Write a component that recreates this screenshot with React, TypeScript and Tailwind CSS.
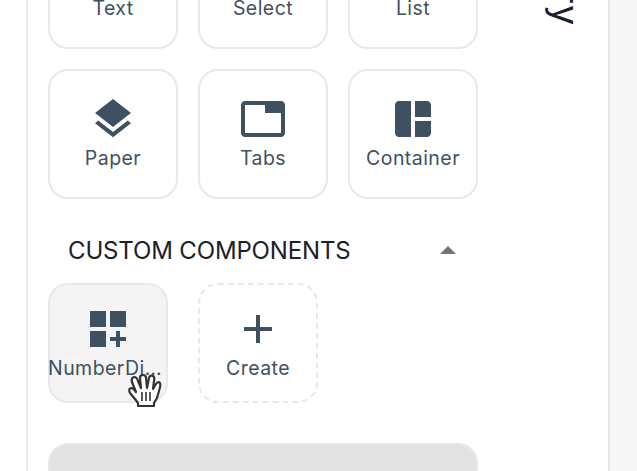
import type { ReactNode } from "react";

const paths = {
  layers:
    "M11.99 18.54l-7.37-5.73L3 14.07l9 7 9-7-1.63-1.27-7.38 5.74zM12 16l7.36-5.73L21 9l-9-7-9 7 1.63 1.27L12 16z",
  tab: "M21 3H3c-1.1 0-2 .9-2 2v14c0 1.1.9 2 2 2h18c1.1 0 2-.9 2-2V5c0-1.1-.9-2-2-2zm0 16H3V5h10v4h8v10z",
  container:
    "M11 21H5c-1.1 0-2-.9-2-2V5c0-1.1.9-2 2-2h6v18zm2 0h6c1.1 0 2-.9 2-2v-6h-8v8zm8-10V5c0-1.1-.9-2-2-2h-6v8h8z",
  widgets: "M3 3h8v8H3zM13 3h8v8h-8zM3 13h8v8H3zM18 13h-2v3h-3v2h3v3h2v-3h3v-2h-3z",
  add: "M19 13h-6v6h-2v-6H5v-2h6V5h2v6h6v2z",
};

function Icon({ name }: { name: keyof typeof paths }) {
  return (
    <svg viewBox="0 0 24 24" className="size-12 shrink-0 fill-[#3f5060]">
      <path d={paths[name]} />
    </svg>
  );
}

function Tile({ label, icon }: { label: string; icon?: keyof typeof paths }) {
  return (
    <div className="flex size-[130px] shrink-0 flex-col items-center rounded-[20px] border-2 border-[#e5e9ee] pt-6">
      {icon ? <Icon name={icon} /> : <div className="size-12 shrink-0" />}
      <span className="leading-[30px]">{label}</span>
    </div>
  );
}

function SmallTile({ className, children }: { className: string; children: ReactNode }) {
  return (
    <div className={`flex size-[120px] shrink-0 flex-col items-center rounded-[20px] border-2 border-[#e5e9ee] pt-5 ${className}`}>
      {children}
    </div>
  );
}

function HandCursor() {
  return (
    <svg viewBox="0 0 36 38" className="absolute left-[127px] top-[372px] h-[38px] w-9">
      <path
        d="M11 34V31L8 27L3 21Q1 17 4 16Q6 16 9 20L5 10Q4 6 7 5Q10 5 11 9L14 16L13 6Q13 3 16 3Q19 3 19 6L20 16L22 6Q23 3 26 4Q28 5 27 9L26 17L29 12Q31 9 33 11Q34 13 32 19L30 26L27 31V34Z"
        className="fill-white stroke-[#333]"
        strokeWidth="2.2"
        strokeLinejoin="round"
      />
      <path d="M15 20V29M19 20V29M23 20V29" className="fill-none stroke-[#333]" strokeWidth="1.6" />
    </svg>
  );
}

export default function App() {
  return (
    <div className="relative flex h-[471px] w-[637px] overflow-hidden bg-white font-['Inter',sans-serif] text-[19.5px] font-[370] tracking-[0.45px] text-[#3f5060]">
      <aside className="ml-[26px] flex h-full w-[584px] shrink-0 justify-between border-x-2 border-[#e5e9ee]">
        <div className="ml-5 w-[430px] shrink-0">
          <div className="-mt-[81px] flex gap-5">
            <Tile label="Text" />
            <Tile label="Select" />
            <Tile label="List" />
          </div>
          <div className="mt-5 flex gap-5">
            <Tile label="Paper" icon="layers" />
            <Tile label="Tabs" icon="tab" />
            <Tile label="Container" icon="container" />
          </div>
          <div className="mt-8 flex h-10 items-center justify-between pl-5 pr-[22px] text-[24px] font-[370] tracking-[-0.15px] text-[#1b2127]">
            <span>CUSTOM COMPONENTS</span>
            <svg viewBox="0 0 16 8" className="mb-0.5 h-2 w-4 fill-[#757575]">
              <path d="M0 8L8 0L16 8Z" />
            </svg>
          </div>
          <div className="mt-3 flex gap-[30px]">
            <SmallTile className="bg-[#f4f4f4]">
              <Icon name="widgets" />
              <span className="-ml-1 w-[116px] truncate leading-[30px]">NumberDisplay</span>
            </SmallTile>
            <SmallTile className="border-dashed">
              <Icon name="add" />
              <span className="leading-[30px]">Create</span>
            </SmallTile>
          </div>
          <div className="mt-10 h-[130px] rounded-[20px] border-2 border-[#e5e9ee] bg-[#e3e3e3]" />
        </div>
        <div className="mr-[18px] flex h-[26px] items-end justify-end self-start whitespace-nowrap text-[36px] font-[370] leading-[48px] tracking-[1px] text-[#1b2127] [writing-mode:vertical-rl]">
          Library
        </div>
      </aside>
      <div className="h-full flex-1 bg-[#f7f7f7]" />
      <HandCursor />
    </div>
  );
}
